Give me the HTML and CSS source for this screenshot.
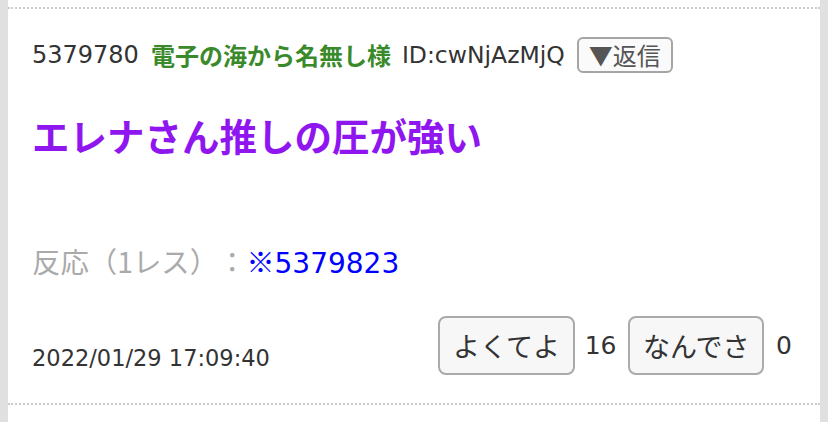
FILE: index.html
```html
<!DOCTYPE html>
<html lang="ja">
<head>
    <meta charset="UTF-8">
    <meta name="viewport" content="width=device-width, initial-scale=1.0">
    <title>レス 5379780</title>
    <link rel="stylesheet" href="styles.css">
</head>
<body>
    <div class="thread">
        <div class="post">
            <div class="post-head">
                <span class="post-no">5379780</span>
                <span class="post-name">電子の海から名無し様</span>
                <span class="post-id">ID:cwNjAzMjQ</span>
                <button class="reply-btn">▼返信</button>
            </div>
            <div class="post-body">エレナさん推しの圧が強い</div>
            <div class="post-res">
                <span class="res-label">反応（1レス）：</span><a class="res-link" href="#r5379823"><span class="res-mark">※</span>5379823</a>
            </div>
            <div class="post-foot">
                <span class="post-date">2022/01/29 17:09:40</span>
                <div class="votes">
                    <button class="vote-btn">よくてよ</button>
                    <span class="vote-count">16</span>
                    <button class="vote-btn">なんでさ</button>
                    <span class="vote-count">0</span>
                </div>
            </div>
        </div>
    </div>
</body>
</html>
```

FILE: styles.css
```css
html, body {
    height: 100%;
}
body {
    margin: 0;
    background-color: #e0e0e0;
    font-family: "DejaVu Sans", "Noto Sans CJK JP", sans-serif;
    color: #333;
    overflow: hidden;
    text-spacing-trim: space-all;
}
.thread {
    margin: 0 8px;
    padding-top: 7px;
    background: white;
    height: 100%;
    box-sizing: border-box;
}
.post {
    border-top: 2px dotted #ccc;
    border-bottom: 2px dotted #ccc;
    padding: 28px 24px 28px 24px;
}
.post-head {
    display: flex;
    align-items: center;
    gap: 12px;
    font-size: 24px;
    height: 35px;
}
.post-name {
    color: #3a8a2c;
    font-weight: bold;
    font-family: "Noto Sans CJK JP", sans-serif;
}
.post-id {
    font-size: 23.5px;
    margin-left: -1px;
}
.reply-btn {
    font-family: "Noto Sans CJK JP", sans-serif;
    font-size: 24px;
    color: #555;
    background: #fafafa;
    border: 2px solid #a5a5a5;
    border-radius: 6px;
    height: 36px;
    padding: 0 10px;
    line-height: 1;
}
.post-body {
    margin-top: 36px;
    font-family: "Noto Sans CJK JP", sans-serif;
    font-size: 37.5px;
    line-height: 53px;
    font-weight: bold;
    color: #9016f0;
}
.post-res {
    margin-top: 80px;
    font-size: 28px;
    line-height: 40px;
}
.res-label {
    color: #aaa;
    font-family: "Noto Sans CJK JP", sans-serif;
    font-size: 28.4px;
}
.res-link {
    color: #0000ff;
    text-decoration: none;
}
.res-mark {
    font-family: "Noto Sans CJK JP", sans-serif;
}
.post-foot {
    margin-top: 32px;
    display: flex;
    justify-content: space-between;
    align-items: flex-end;
}
.post-date {
    font-size: 22.5px;
    line-height: 30px;
    margin-bottom: 2px;
}
.votes {
    display: flex;
    align-items: center;
    margin-right: 4px;
}
.vote-btn {
    font-family: "Noto Sans CJK JP", sans-serif;
    font-size: 27px;
    color: #333;
    background: #f7f7f7;
    border: 2px solid #aaa;
    border-radius: 8px;
    height: 59px;
    padding: 0 12.5px;
}
.vote-count {
    font-size: 25px;
    margin: 0 12px 0 10px;
}
.vote-count:last-child {
    margin: 0 0 0 12px;
}
```
